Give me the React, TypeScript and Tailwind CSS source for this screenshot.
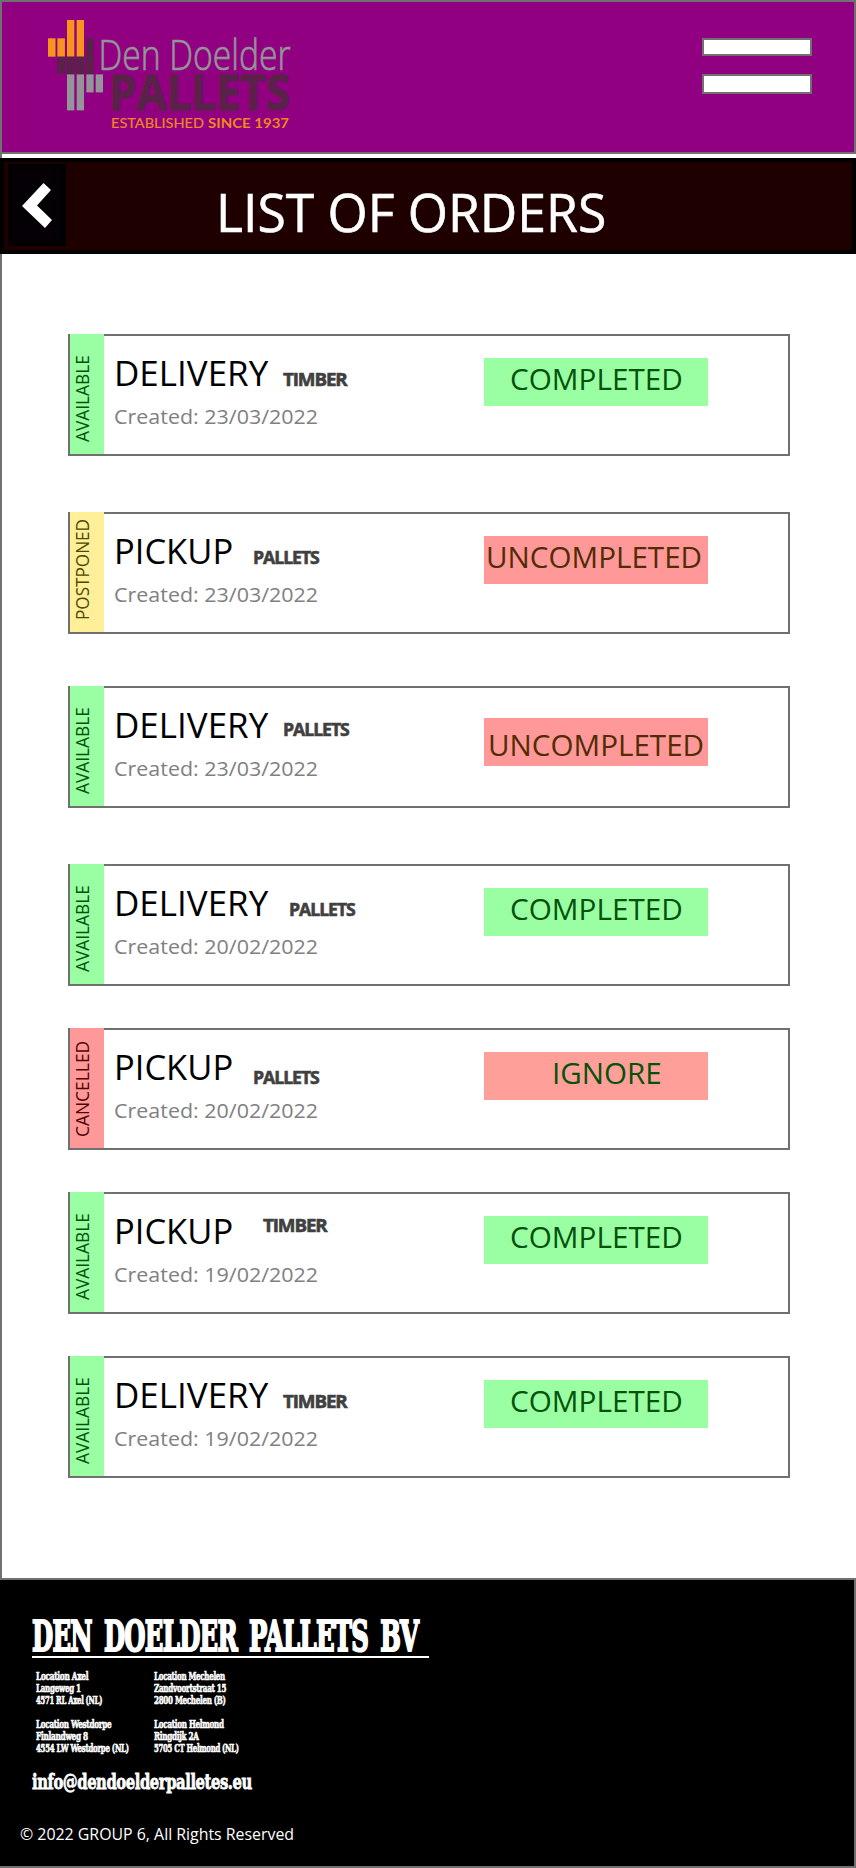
import { useLayoutEffect, useRef, useState } from "react";
import type { ReactNode } from "react";

const SANS = "font-['Open_Sans','Noto_Sans',sans-serif]";
const SLAB = "font-['DejaVu_Serif','Liberation_Serif',serif]";

type FitProps = {
  width: number;
  className?: string;
  vertical?: boolean;
  children: ReactNode;
};

/** One line of text condensed or expanded to occupy exactly `width` pixels. */
function Fit({ width, className = "", vertical = false, children }: FitProps) {
  const ref = useRef<HTMLSpanElement>(null);
  const [ratio, setRatio] = useState(1);

  useLayoutEffect(() => {
    const el = ref.current;
    if (!el) return;
    const natural = vertical ? el.offsetHeight : el.offsetWidth;
    if (natural > 0) setRatio(width / natural);
  }, [width, vertical, children]);

  return (
    <span
      className={`block shrink-0 ${vertical ? "rotate-180 [writing-mode:vertical-rl]" : ""} ${className}`}
      style={vertical ? { height: width } : { width }}
    >
      <span
        ref={ref}
        className={`inline-block whitespace-nowrap ${vertical ? "origin-top" : "origin-left"}`}
        style={{ transform: vertical ? `scaleY(${ratio})` : `scaleX(${ratio})` }}
      >
        {children}
      </span>
    </span>
  );
}

function Logo() {
  return (
    <svg width="246" height="96" viewBox="46 18 246 96" role="img" aria-label="Den Doelder Pallets">
      <rect x="57.4" y="56" width="36.2" height="18" fill="#5a2149" opacity="0.45" />
      <g fill="#f7941e">
        <rect x="48" y="38.3" width="7.5" height="18.4" />
        <rect x="57.4" y="38.3" width="7.5" height="18.4" />
        <rect x="67" y="20" width="7.3" height="36.7" />
        <rect x="76.7" y="20" width="7.3" height="36.7" />
      </g>
      <g fill="#5a2149">
        <rect x="57.4" y="56.7" width="7.5" height="17.3" />
        <rect x="67" y="56.7" width="7.3" height="17.3" />
        <rect x="76.7" y="56.7" width="7.3" height="17.3" />
        <rect x="86.3" y="38.3" width="7.3" height="35.7" />
      </g>
      <g fill="#939598">
        <rect x="67" y="74.4" width="7.3" height="36" />
        <rect x="76.7" y="74.4" width="7.3" height="36" />
        <rect x="86.3" y="74.4" width="7.3" height="18" />
        <rect x="95.7" y="74.4" width="7.3" height="18" />
      </g>
      <text x="98.5" y="70.3" textLength="192" lengthAdjust="spacingAndGlyphs" fill="#939598" stroke="#939598" strokeWidth="0.7" className="font-['Open_Sans'] text-[42.5px] font-light">Den Doelder</text>
      <text x="109" y="110.3" textLength="181" lengthAdjust="spacingAndGlyphs" fill="#5a2149" stroke="#5a2149" strokeWidth="1" className="font-['Open_Sans'] text-[48.5px] font-bold">PALLETS</text>
      <text x="111" y="127.7" textLength="93" lengthAdjust="spacingAndGlyphs" fill="#f0861f" stroke="#f0861f" strokeWidth="0.2" className="font-['Lato'] text-[14px]">ESTABLISHED</text>
      <text x="208" y="127.7" textLength="81" lengthAdjust="spacingAndGlyphs" fill="#f0861f" className="font-['Lato'] text-[14px] font-bold">SINCE 1937</text>
    </svg>
  );
}

type Order = {
  gap: string;
  status: string;
  statusWidth: number;
  statusStyle: string;
  kind: string;
  kindWidth: number;
  material: string;
  materialWidth: number;
  materialStyle: string;
  date: string;
  result: string;
  resultWidth: number;
  resultStyle: string;
};

const available = { status: "AVAILABLE", statusWidth: 87, statusStyle: "bg-[#99ffa2] text-[#04520c] pt-[21px]" };
const delivery = { kind: "DELIVERY", kindWidth: 154 };
const pickup = { kind: "PICKUP", kindWidth: 119 };
const timber = { material: "TIMBER", materialWidth: 64 };
const pallets = { material: "PALLETS", materialWidth: 66 };
const completed = { result: "COMPLETED", resultWidth: 173, resultStyle: "mt-[22px] bg-[#99ffa2] text-[#04520c] pl-[26px] pt-[2px]" };

const orders: Order[] = [
  { gap: "mt-0", ...available, ...delivery, ...timber, materialStyle: "ml-[15px] mt-[30px]", date: "23/03/2022", ...completed },
  { gap: "mt-14", status: "POSTPONED", statusWidth: 101, statusStyle: "bg-[#ffef99] text-[#4d4803] pt-[7px]", ...pickup, ...pallets, materialStyle: "ml-[20px] mt-[30px]", date: "23/03/2022", result: "UNCOMPLETED", resultWidth: 216, resultStyle: "mt-[22px] bg-[#ff9999] text-[#522c04] pl-[2px] pt-[2px]" },
  { gap: "mt-[52px]", ...available, ...delivery, ...pallets, materialStyle: "ml-[15px] mt-[28px]", date: "23/03/2022", result: "UNCOMPLETED", resultWidth: 216, resultStyle: "mt-[30px] bg-[#ff9999] text-[#522c04] pl-[4px] pt-[8px]" },
  { gap: "mt-14", ...available, ...delivery, ...pallets, materialStyle: "ml-[21px] mt-[30px]", date: "20/02/2022", ...completed },
  { gap: "mt-[42px]", status: "CANCELLED", statusWidth: 96, statusStyle: "bg-[#ff9999] text-[#520404] pt-[13px]", ...pickup, ...pallets, materialStyle: "ml-[20px] mt-[34px]", date: "20/02/2022", result: "IGNORE", resultWidth: 110, resultStyle: "mt-[22px] bg-[#ff9f99] text-[#04520c] pl-[68px] pt-[2px]" },
  { gap: "mt-[42px]", ...available, ...pickup, ...timber, materialStyle: "ml-[30px] mt-[18px]", date: "19/02/2022", ...completed },
  { gap: "mt-[42px]", ...available, ...delivery, ...timber, materialStyle: "ml-[15px] mt-[30px]", date: "19/02/2022", ...completed },
];

function OrderCard({ order }: { order: Order }) {
  return (
    <article className={`flex h-[122px] w-[722px] border-2 border-[#707070] ${order.gap}`}>
      <div className={`-mt-[2px] flex h-[120px] w-[34px] shrink-0 ${order.statusStyle}`}>
        <Fit vertical width={order.statusWidth} className="-ml-[2px] w-7 text-[18.5px] leading-7">
          {order.status}
        </Fit>
      </div>
      <div className="ml-[9px] w-[371px] shrink-0">
        <div className="flex h-[66px]">
          <Fit width={order.kindWidth} className="ml-px pt-[13px] text-[34.5px] leading-[48px] text-black">
            {order.kind}
          </Fit>
          <Fit
            width={order.materialWidth}
            className={`text-[18.5px] leading-[26px] font-bold tracking-[-0.06em] text-[#404040] [-webkit-text-stroke:0.6px_#404040] ${order.materialStyle}`}
          >
            {order.material}
          </Fit>
        </div>
        <Fit width={204} className="ml-px text-[20.5px] leading-7 text-[#808080]">
          Created: {order.date}
        </Fit>
      </div>
      <div className={`h-12 w-56 shrink-0 ${order.resultStyle}`}>
        <Fit width={order.resultWidth} className="text-[28.5px] leading-[38px]">
          {order.result}
        </Fit>
      </div>
    </article>
  );
}

const locations: { text: string; width: number }[][][] = [
  [
    [{ text: "Location Axel", width: 52 }, { text: "Langeweg 1", width: 45 }, { text: "4571 RL Axel (NL)", width: 66 }],
    [{ text: "Location Westdorpe", width: 75 }, { text: "Finlandweg 8", width: 52 }, { text: "4554 LW Westdorpe (NL)", width: 93 }],
  ],
  [
    [{ text: "Location Mechelen", width: 71 }, { text: "Zandvoortstraat 15", width: 72 }, { text: "2800 Mechelen (B)", width: 72 }],
    [{ text: "Location Helmond", width: 70 }, { text: "Ringdijk 2A", width: 45 }, { text: "5705 CT Helmond (NL)", width: 85 }],
  ],
];

export default function App() {
  return (
    <div className={`flex h-[1868px] w-[856px] flex-col bg-white ${SANS}`}>
      <header className="flex h-[154px] shrink-0 justify-between border-2 border-[#707070] bg-[#910081] pt-4 pr-[42px] pl-11">
        <div className="h-[116px] w-[246px] [&>svg]:overflow-visible">
          <Logo />
        </div>
        <button aria-label="Menu" className="flex w-[110px] flex-col gap-[18px] pt-5">
          <span className="block h-[18px] w-full border-2 border-[#707070] bg-white" />
          <span className="block h-5 w-full border-2 border-[#707070] bg-white" />
        </button>
      </header>

      <div className="h-1 shrink-0 border-l-2 border-[#707070]" />

      <div className="flex h-24 shrink-0 border-4 border-black bg-[#1e0000] pt-[2px] pl-1">
        <button aria-label="Back" className="h-[82px] w-[58px] shrink-0 border-4 border-black bg-[#050005]">
          <svg width="50" height="74" viewBox="12 168 50 74" fill="#ffffff">
            <path d="M22 206 43.5 183 51 190 37 205.5 52 220 45 228Z" />
          </svg>
        </button>
        <h1 className="ml-[150px] pt-[11px] text-white">
          <Fit width={390} className="text-[53.5px] leading-[74px] [-webkit-text-stroke:0.6px_white]">LIST OF ORDERS</Fit>
        </h1>
      </div>

      <main className="flex h-[1324px] shrink-0 flex-col border-l-2 border-[#707070] pt-20 pl-[66px]">
        {orders.map((order, i) => (
          <OrderCard key={i} order={order} />
        ))}
      </main>

      <footer className="flex h-[290px] flex-col border-y-2 border-r-2 border-[#707070] bg-black text-white">
        <div className={`ml-8 h-[78px] w-[397px] border-b-2 border-white pt-[27px] ${SLAB}`}>
          <Fit width={386} className="text-[42px] leading-[60px] font-bold tracking-[-0.03em] [word-spacing:0.18em] [-webkit-text-stroke:2.2px_white]">DEN DOELDER PALLETS BV</Fit>
        </div>
        <div className={`ml-9 flex pt-3 ${SLAB}`}>
          {locations.map((column, c) => (
            <div key={c} className="flex w-[118px] flex-col gap-3">
              {column.map((block, b) => (
                <address key={b} className="not-italic">
                  {block.map((line) => (
                    <Fit key={line.text} width={line.width} className="h-3 text-[10.5px] leading-3 font-bold tracking-[-0.04em] [-webkit-text-stroke:0.6px_white]">
                      {line.text}
                    </Fit>
                  ))}
                </address>
              ))}
            </div>
          ))}
        </div>
        <Fit width={220} className={`mt-[13px] ml-8 text-[21px] leading-[30px] font-bold tracking-[-0.03em] [-webkit-text-stroke:0.8px_white] ${SLAB}`}>
          info@dendoelderpalletes.eu
        </Fit>
        <Fit width={274} className="mt-[25px] ml-5 text-[16px] leading-6">
          © 2022 GROUP 6, All Rights Reserved
        </Fit>
      </footer>
    </div>
  );
}
